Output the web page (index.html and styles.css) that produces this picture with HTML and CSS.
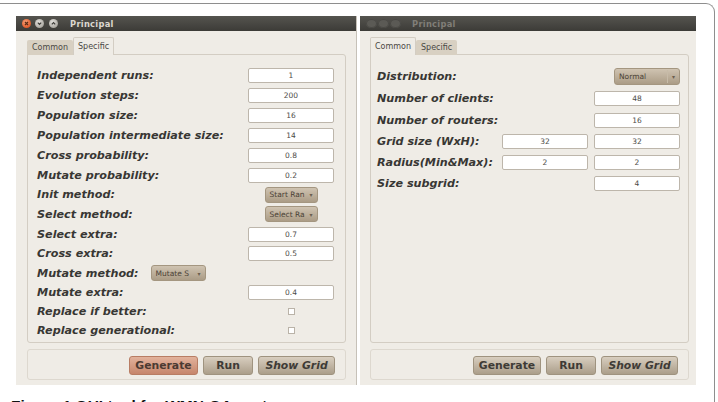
FILE: index.html
```html
<!DOCTYPE html>
<html>
<head>
<meta charset="utf-8">
<link rel="stylesheet" href="styles.css">
</head>
<body>
<div class="frame">
  <div class="windows">
    <div class="win win-left">
      <div class="titlebar">
        <span class="tb-btn tb-close"><svg width="9" height="9" viewBox="0 0 9 9"><path d="M3 3L6 6M6 3L3 6" stroke="#5a2a14" stroke-width="1.2"/></svg></span>
        <span class="tb-btn tb-min"><svg width="9" height="9" viewBox="0 0 9 9"><path d="M2.8 3.6L4.5 5.4L6.2 3.6" fill="none" stroke="#3c3b37" stroke-width="1.2"/></svg></span>
        <span class="tb-btn tb-max"><svg width="9" height="9" viewBox="0 0 9 9"><path d="M2.8 5.4L4.5 3.6L6.2 5.4" fill="none" stroke="#3c3b37" stroke-width="1.2"/></svg></span>
        <span class="tb-title">Principal</span>
      </div>
      <div class="win-body">
        <div class="tabs">
          <span class="tab">Common</span>
          <span class="tab tab-active">Specific</span>
        </div>
        <div class="panel panel-left">
          <div class="row"><span class="lbl">Independent runs:</span><span class="val"><span class="entry">1</span></span></div>
          <div class="row"><span class="lbl">Evolution steps:</span><span class="val"><span class="entry">200</span></span></div>
          <div class="row"><span class="lbl">Population size:</span><span class="val"><span class="entry">16</span></span></div>
          <div class="row"><span class="lbl">Population intermediate size:</span><span class="val"><span class="entry">14</span></span></div>
          <div class="row"><span class="lbl">Cross probability:</span><span class="val"><span class="entry">0.8</span></span></div>
          <div class="row"><span class="lbl">Mutate probability:</span><span class="val"><span class="entry">0.2</span></span></div>
          <div class="row row-c"><span class="lbl">Init method:</span><span class="val"><span class="combo"><span class="combo-txt">Start Ran</span><span class="combo-arr">▾</span></span></span></div>
          <div class="row"><span class="lbl">Select method:</span><span class="val"><span class="combo"><span class="combo-txt">Select Ra</span><span class="combo-arr">▾</span></span></span></div>
          <div class="row"><span class="lbl">Select extra:</span><span class="val"><span class="entry">0.7</span></span></div>
          <div class="row row-c"><span class="lbl">Cross extra:</span><span class="val"><span class="entry">0.5</span></span></div>
          <div class="row"><span class="lbl lbl-fixed">Mutate method:</span><span class="combo combo-inline"><span class="combo-txt">Mutate S</span><span class="combo-arr">▾</span></span></div>
          <div class="row row-c"><span class="lbl">Mutate extra:</span><span class="val"><span class="entry">0.4</span></span></div>
          <div class="row row-c"><span class="lbl">Replace if better:</span><span class="val"><span class="check"></span></span></div>
          <div class="row row-k"><span class="lbl">Replace generational:</span><span class="val"><span class="check"></span></span></div>
        </div>
        <div class="btnbox">
          <span class="btn btn-default">Generate</span>
          <span class="btn btn-run">Run</span>
          <span class="btn btn-grid"><i>Show Grid</i></span>
        </div>
      </div>
    </div>
    <div class="win win-right">
      <div class="titlebar titlebar-inactive">
        <span class="tb-btn tb-dim"></span>
        <span class="tb-btn tb-dim"></span>
        <span class="tb-btn tb-dim"></span>
        <span class="tb-title">Principal</span>
      </div>
      <div class="win-body win-body-right">
        <div class="tabs">
          <span class="tab tab-active">Common</span>
          <span class="tab">Specific</span>
        </div>
        <div class="panel panel-right">
          <div class="grid">
            <span class="lbl span2">Distribution:</span>
            <span class="c3 endal"><span class="combo combo-dist"><span class="combo-txt">Normal</span><span class="combo-sep"></span><span class="combo-arr">▾</span></span></span>
            <span class="lbl span2">Number of clients:</span>
            <span class="c3"><span class="entry">48</span></span>
            <span class="lbl span2">Number of routers:</span>
            <span class="c3"><span class="entry">16</span></span>
            <span class="lbl">Grid size (WxH):</span>
            <span><span class="entry">32</span></span>
            <span><span class="entry">32</span></span>
            <span class="lbl">Radius(Min&amp;Max):</span>
            <span><span class="entry">2</span></span>
            <span><span class="entry">2</span></span>
            <span class="lbl span2">Size subgrid:</span>
            <span class="c3"><span class="entry">4</span></span>
          </div>
        </div>
        <div class="btnbox">
          <span class="btn btn-run btn-gen2">Generate</span>
          <span class="btn btn-run">Run</span>
          <span class="btn btn-grid"><i>Show Grid</i></span>
        </div>
      </div>
    </div>
  </div>
  <p class="caption"><b>Figure 1</b> <span class="c-rest">GUI tool for WMN-GA system</span></p>
</div>
</body>
</html>
```

FILE: styles.css
```css
html, body {
  margin: 0;
  padding: 0;
  background: #ffffff;
  overflow: hidden;
}
body {
  width: 718px;
  height: 402px;
  font-family: "DejaVu Sans", "Liberation Sans", sans-serif;
}
.frame {
  margin: 3px 3px 0 -10px;
  border: 1px solid #8e8e8e;
  border-bottom: none;
  border-radius: 0 9px 0 0;
  padding: 12px 17px 0 25px;
  height: 420px;
}
.windows {
  display: flex;
  gap: 3px;
  background: #fff;
}
.win {
  background: #efece6;
  height: 369px;
  display: flex;
  flex-direction: column;
}
.win-left {
  width: 340px;
  border-right: 1px solid #c6c1b8;
}
.win-right {
  width: 336px;
}
.titlebar {
  height: 15px;
  background: linear-gradient(#55544f, #3c3b37);
  display: flex;
  align-items: center;
  padding-left: 6px;
}
.tb-btn {
  width: 9px;
  height: 9px;
  border-radius: 50%;
  margin-right: 3px;
  display: flex;
}
.tb-close {
  background: radial-gradient(circle at 40% 35%, #f6a27a, #e05a2a 70%);
}
.tb-min, .tb-max {
  background: radial-gradient(circle at 40% 35%, #e4e2de, #a9a69f 75%);
}
.tb-min { margin-left: 1px; }
.tb-max { margin-left: 2px; }
.tb-dim {
  background: #5b5a55;
  box-shadow: inset 0 0 0 1px #4a4945;
  margin-right: 1px;
  width: 11px;
}
.tb-title {
  margin-left: 9px;
  font-weight: bold;
  font-size: 8.3px;
  color: #dcd8d0;
  letter-spacing: 0.3px;
}
.titlebar-inactive .tb-title {
  color: #807e78;
  margin-left: 10px;
}
.win-body {
  flex: 1;
  display: flex;
  flex-direction: column;
  padding: 6px 10px 4px 11px;
}
.win-body-right {
  padding: 6px 7px 4px 10px;
}
.tabs {
  display: flex;
  align-items: flex-end;
  height: 18px;
  position: relative;
  z-index: 1;
}
.tab {
  font-size: 8px;
  color: #4a4844;
  height: 15px;
  line-height: 15px;
  padding: 0 5px;
  background: #d8d0c2;
  border-radius: 2px 2px 0 0;
}
.tab-active {
  background: #efece6;
  height: 18px;
  line-height: 17px;
  border: 1px solid #d3cdc3;
  border-bottom: none;
  box-sizing: border-box;
  padding: 0 4px;
}
.panel {
  border: 1px solid #d3cdc3;
  border-radius: 0 3px 3px 3px;
  height: 289px;
  box-sizing: border-box;
  margin-top: -1px;
}
.panel-left {
  padding: 10px 11px 0 9px;
}
.panel-right {
  padding: 10px 8px 0 6px;
}
.row {
  display: flex;
  align-items: center;
  height: 20px;
}
.row-c { height: 19px; }
.row-k { height: 18px; }
.lbl {
  font-weight: bold;
  font-style: italic;
  font-size: 11.2px;
  color: #383734;
  white-space: nowrap;
  flex: 1;
}
.lbl-fixed { flex: none; }
.val {
  width: 86px;
  display: flex;
  justify-content: center;
}
.entry {
  display: block;
  width: 86px;
  height: 15px;
  box-sizing: border-box;
  background: #fff;
  border: 1px solid #bdb6ab;
  border-radius: 2px;
  font-size: 7.5px;
  line-height: 13px;
  text-align: center;
  color: #4d4b47;
}
.combo {
  display: flex;
  align-items: center;
  width: 53px;
  height: 16px;
  box-sizing: border-box;
  border: 1px solid #a49680;
  border-radius: 3px;
  background: linear-gradient(#cfc3b1, #ab9c86);
  font-size: 7.5px;
  color: #4b4236;
}
.combo-inline {
  margin-left: 12px;
  width: 55px;
}
.combo-txt {
  flex: 1;
  white-space: nowrap;
  padding-left: 4px;
}
.combo-arr {
  font-size: 6px;
  width: 11px;
  text-align: center;
  color: #6b5f4f;
}
.combo-dist {
  width: 66px;
  height: 17px;
}
.combo-sep {
  width: 1px;
  height: 13px;
  background: #c7bba8;
}
.check {
  display: block;
  width: 7px;
  height: 7px;
  box-sizing: border-box;
  border: 1px solid #bab3a8;
  background: #fff;
}
.grid {
  display: grid;
  grid-template-columns: 119px 86px 86px;
  column-gap: 6px;
  grid-template-rows: 22px 22px 22px 21px 21px 21px;
  align-items: center;
}
.grid .lbl { flex: none; }
.span2 { grid-column: 1 / span 2; }
.c3 { grid-column: 3; }
.endal { display: flex; justify-content: flex-end; }
.btnbox {
  margin-top: 6px;
  height: 31px;
  box-sizing: border-box;
  border: 1px solid #ddd8cf;
  border-radius: 3px;
  display: flex;
  justify-content: flex-end;
  align-items: flex-start;
  gap: 5px;
  padding: 6px 10px 0 0;
}
.btn {
  height: 19px;
  box-sizing: border-box;
  border: 1px solid #9f937f;
  border-radius: 3px;
  font-size: 10.8px;
  font-weight: bold;
  color: #3e3b36;
  line-height: 17px;
  text-align: center;
  background: linear-gradient(#d8cebf, #ab9e8a);
}
.btn-default {
  width: 69px;
  border-color: #b87d64;
  background: linear-gradient(#e2b29c, #c6866c);
  color: #4b3a32;
}
.btn-run { width: 50px; }
.btn-gen2 { width: 68px; }
.btn-grid { width: 77px; }
.btn i { font-style: italic; }
.caption {
  margin: 12px 0 0 -5px;
  font-family: "Liberation Sans", Arial, sans-serif;
  font-size: 15.5px;
  font-weight: bold;
  color: #111;
}
```
